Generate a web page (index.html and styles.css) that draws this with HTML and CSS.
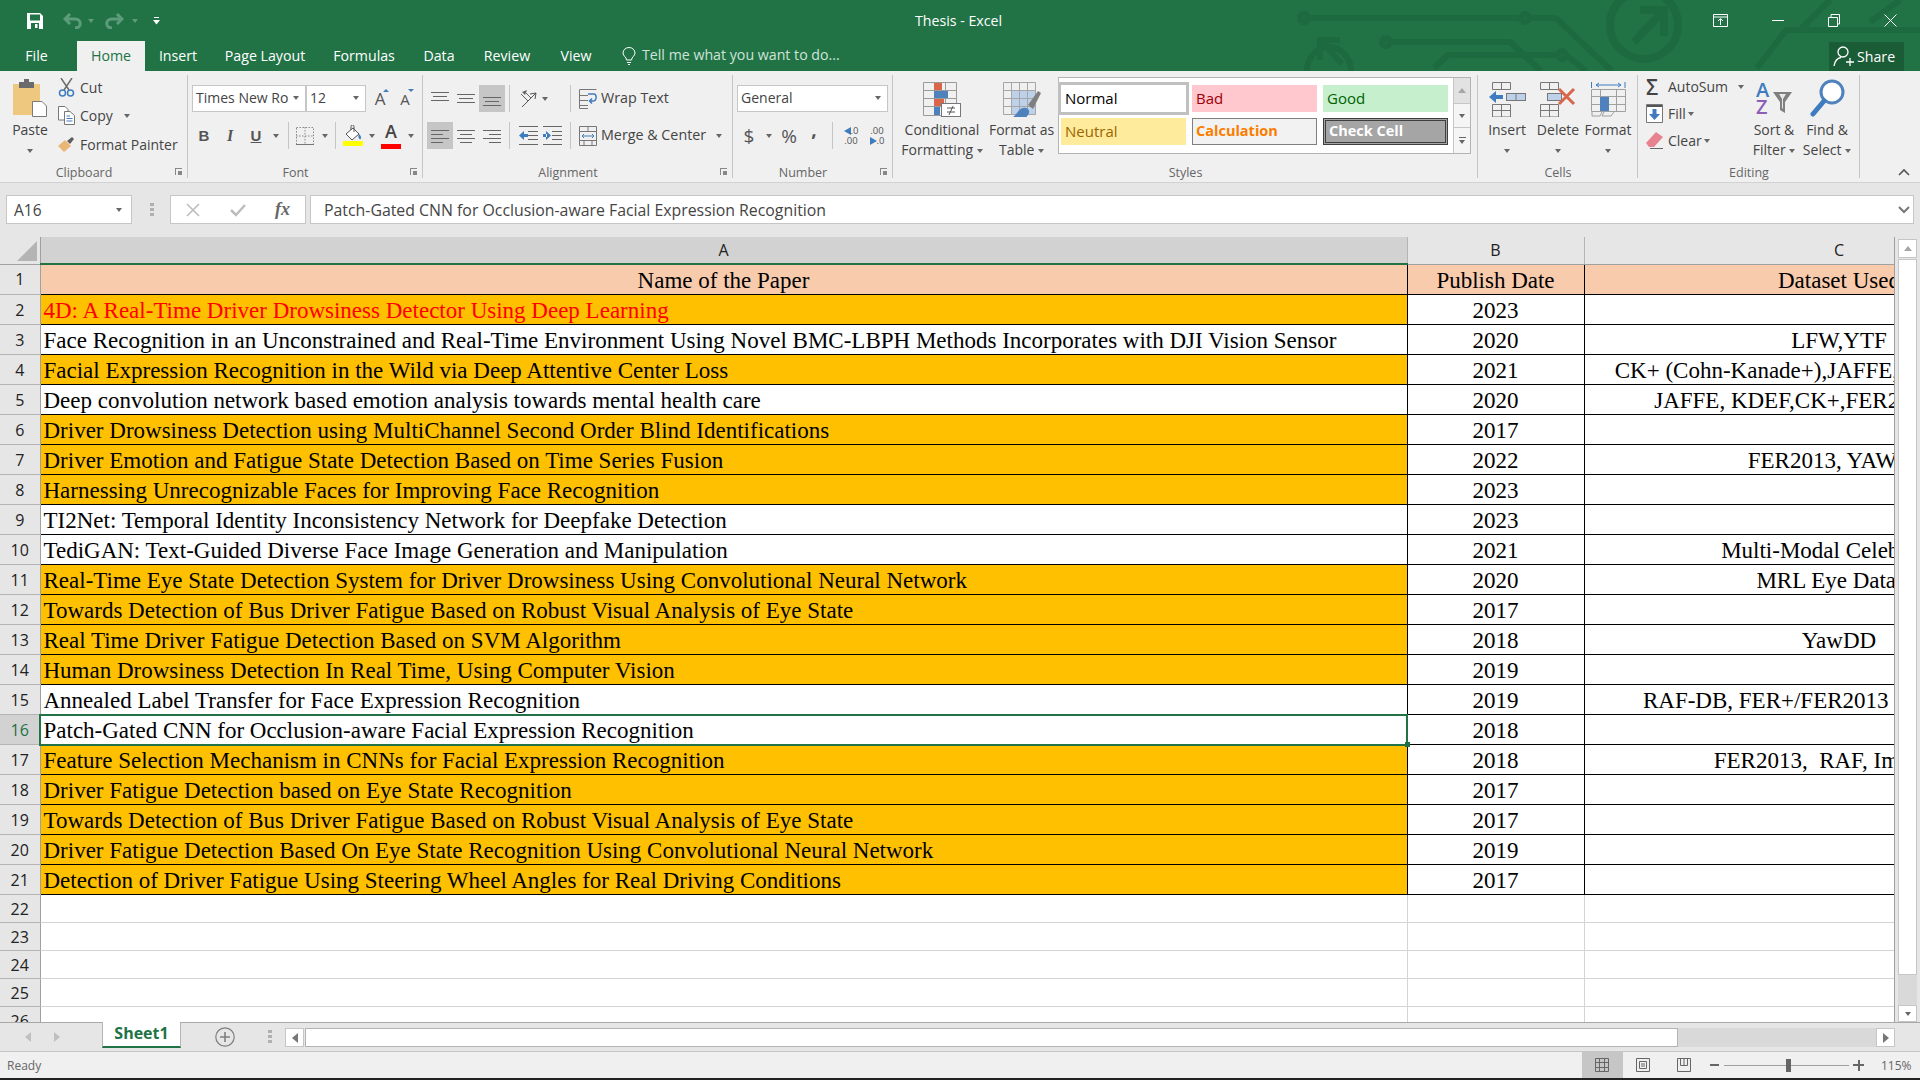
FILE: index.html
```html
<!DOCTYPE html>
<html lang="en">
<head>
  <meta charset="UTF-8">
  <title>Thesis - Excel</title>
  <link rel="stylesheet" href="styles.css">
</head>
<body>
  <header class="titlebar">
    <svg class="circuit" width="1920" height="71" viewBox="0 0 1920 71">
      <g fill="none" stroke="#1e6a40" stroke-width="6">
        <circle cx="1304" cy="18" r="4"/>
        <path d="M1308 18H1521M1529 18H1556L1612 71"/>
        <circle cx="1525" cy="18" r="4"/>
        <circle cx="1386" cy="42" r="4"/>
        <path d="M1390 42H1510L1541 71"/>
        <circle cx="1562" cy="55" r="4"/>
        <path d="M1434 68L1448 55H1558M1566 55L1586 71"/>
        <circle cx="1644" cy="25" r="34" stroke-width="8"/>
        <path d="M1634 42L1662 12M1640 10H1664V36" stroke-width="8"/>
        <path d="M1307 71A22 24 0 1 1 1351 71" stroke-width="6"/>
        <path d="M1342 64L1322 42M1320 60V40H1340" stroke-width="6"/>
        <path d="M1757 68L1786 30H1920M1830 0L1800 30M1870 22L1900 0"/>
      </g>
    </svg>
    <div class="title-row">
      <div class="qat">
        <svg class="ic-save" width="16" height="16" viewBox="0 0 16 16"><path d="M0 0H13L16 3V16H0Z" fill="#fff"/><rect x="3" y="1.5" width="10" height="6" fill="#217346"/><rect x="4" y="10" width="8" height="6" fill="#217346"/><rect x="8" y="11" width="2.5" height="4" fill="#fff"/></svg>
        <svg class="ic-undo" width="20" height="16" viewBox="0 0 20 16"><path d="M7 1L2 6L7 11M2 6H12C19 6 19 15 12 15" fill="none" stroke="#5d9c7a" stroke-width="3"/></svg>
        <span class="caret caret-dim ic-undo-caret"></span>
        <svg class="ic-redo" width="20" height="16" viewBox="0 0 20 16"><path d="M13 1L18 6L13 11M18 6H8C1 6 1 15 8 15" fill="none" stroke="#5d9c7a" stroke-width="3"/></svg>
        <span class="caret caret-dim ic-redo-caret"></span>
        <svg class="ic-more" width="7" height="8" viewBox="0 0 7 8"><path d="M1 .5H6" stroke="#fff"/><path d="M0 3H7L3.5 7.5Z" fill="#fff"/></svg>
      </div>
      <div class="doc-title">Thesis - Excel</div>
      <div class="win-controls">
        <svg width="15" height="13" viewBox="0 0 15 13"><path d="M.5.5H14.5V12.5H.5ZM.5 3H14.5M7.5 11V5M5 7L7.5 4.5L10 7" fill="none" stroke="#fff"/></svg>
        <svg width="12" height="13" viewBox="0 0 12 13"><path d="M0 6.5H12" stroke="#fff"/></svg>
        <svg width="12" height="13" viewBox="0 0 12 13"><path d="M.5 3.5H9.5V12.5H.5ZM3 3V.5H11.5V10H10" fill="none" stroke="#fff"/></svg>
        <svg width="13" height="13" viewBox="0 0 13 13"><path d="M.5.5L12.5 12.5M12.5.5L.5 12.5" stroke="#fff"/></svg>
      </div>
    </div>
    <nav class="tabs">
      <span class="tab t-file">File</span>
      <span class="tab t-home">Home</span>
      <span class="tab t-insert">Insert</span>
      <span class="tab t-layout">Page Layout</span>
      <span class="tab t-formulas">Formulas</span>
      <span class="tab t-data">Data</span>
      <span class="tab t-review">Review</span>
      <span class="tab t-view">View</span>
      <svg class="bulb" width="14" height="18" viewBox="0 0 14 18"><path d="M4.5 13C4.5 10 1 9 1 6A6 5.500 0 0 1 13 6C13 9 9.500 10 9.500 13ZM5 15.500H9M6 17.500H8" fill="none" stroke="#fff"/></svg>
      <span class="tell-me">Tell me what you want to do...</span>
      <span class="share">
        <svg width="22" height="22" viewBox="0 0 22 22"><circle cx="10" cy="7" r="5" fill="none" stroke="#fff" stroke-width="1.300"/><path d="M1 21C2 15 5 13 8 12.500M17 13V21M13 17H21" fill="none" stroke="#fff" stroke-width="1.300"/></svg>
        Share
      </span>
    </nav>
  </header>

  <section class="ribbon">
    <div class="group g-clipboard">
      <div class="group-body">
        <div class="large-btn w-paste">
          <div class="large-icon">
            <svg width="34" height="38" viewBox="0 0 34 38"><rect x="0" y="5" width="27" height="31" fill="#edc87e"/><rect x="6" y="3" width="15" height="6" fill="#6b6b6b"/><rect x="11" y="0" width="5" height="4" fill="#6b6b6b"/><path d="M19.500 22.500H29L33.500 27V37.500H19.500Z" fill="#fff" stroke="#7a7a7a"/></svg>
          </div>
          <div class="btn-line">Paste</div>
          <div class="btn-line"><span class="caret"></span></div>
        </div>
        <div class="list-col">
          <div class="list-row">
            <svg class="list-ic" width="17" height="19" viewBox="0 0 17 19"><path d="M3 0L11 12M14 0L6 12" stroke="#6b6b6b" stroke-width="1.500"/><circle cx="4.500" cy="15" r="3" fill="none" stroke="#3f7cbf" stroke-width="1.500"/><circle cx="12.500" cy="15" r="3" fill="none" stroke="#3f7cbf" stroke-width="1.500"/></svg>
            Cut
          </div>
          <div class="list-row">
            <svg class="list-ic" width="17" height="19" viewBox="0 0 17 19"><path d="M.5.5H7L10 3.500V14H.5Z" fill="#fff" stroke="#777"/><path d="M6.500 5.500H12L16.500 9.500V18.500H6.500Z" fill="#fff" stroke="#777"/><path d="M8.500 10H12M8.500 12.500H14.500M8.500 15H14.500" stroke="#3f7cbf"/></svg>
            Copy <span class="caret caret-copy"></span>
          </div>
          <div class="list-row">
            <svg class="list-ic" width="17" height="17" viewBox="0 0 17 17"><path d="M0 10L7 4L13 10L6 16Z" fill="#eab676"/><path d="M9 5L14 1L16 3L12 8Z" fill="#5c5c5c"/></svg>
            Format Painter
          </div>
        </div>
      </div>
      <div class="group-label has-launcher">Clipboard<span class="launcher"></span></div>
    </div>

    <div class="group g-font">
      <div class="group-body rows">
        <div class="row">
          <div class="combo w-fontname"><span>Times New Ro</span><span class="caret"></span></div>
          <div class="combo w-fontsize"><span>12</span><span class="caret"></span></div>
          <span class="tb w24 ml2 size-a">A<i class="tri-up"></i></span>
          <span class="tb w24 ml1 size-a size-a-s">A<i class="tri-down"></i></span>
        </div>
        <div class="row">
          <span class="tb w24 fmt-b">B</span>
          <span class="tb w28 fmt-i">I</span>
          <span class="tb w24 fmt-u">U</span>
          <span class="tb w16"><span class="caret"></span></span>
          <span class="vsep ml4"></span>
          <span class="tb w24 ml4">
            <svg width="18" height="18" viewBox="0 0 18 18"><path d="M.5.5H17.500V17.500H.5Z" fill="none" stroke="#8a8a8a" stroke-dasharray="1.500 1.500"/><path d="M9 0V18M0 9H18" stroke="#8a8a8a" stroke-dasharray="1.500 1.500"/><path d="M0 17.500H18" stroke="#777"/></svg>
          </span>
          <span class="tb w16"><span class="caret"></span></span>
          <span class="vsep ml2"></span>
          <span class="tb w24 ml5">
            <svg width="20" height="21" viewBox="0 0 20 21"><path d="M3 9L10 3L16 9L9 15Z" fill="#fff" stroke="#555"/><path d="M8 5V1.500A1.500 1.500 0 0 1 11 1.500V7" fill="none" stroke="#555"/><path d="M16 9C18 11 19 13 17 14.500C15 13 15 11 16 9Z" fill="#3f7cbf"/><rect x="0" y="16" width="20" height="5" fill="#ffff00"/></svg>
          </span>
          <span class="tb w14"><span class="caret"></span></span>
          <span class="tb w24 color-a">A<i class="color-bar"></i></span>
          <span class="tb w16"><span class="caret"></span></span>
        </div>
      </div>
      <div class="group-label has-launcher">Font<span class="launcher"></span></div>
    </div>

    <div class="group g-align">
      <div class="group-body rows">
        <div class="row">
          <span class="tb w26"><svg width="18" height="14" viewBox="0 0 18 14"><path d="M0 .5H18M2 4.500H16M0 8.500H18" stroke="#666"/></svg></span>
          <span class="tb w26"><svg width="18" height="14" viewBox="0 0 18 14"><path d="M0 2.500H18M2 6.500H16M0 10.500H18" stroke="#666"/></svg></span>
          <span class="tb w26 on"><svg width="18" height="14" viewBox="0 0 18 14"><path d="M0 5.500H18M2 9.500H16M0 13.500H18" stroke="#666"/></svg></span>
          <span class="vsep ml4"></span>
          <span class="tb w24 ml6"><svg width="19" height="19" viewBox="0 0 19 19"><path d="M2 5L9 12M5 2L12 9" stroke="#666"/><path d="M3 3L8 1L6 6Z" fill="#666"/><path d="M3 18L17 4M17 4L11 5M17 4L16 10" fill="none" stroke="#555"/></svg></span>
          <span class="tb w10"><span class="caret"></span></span>
          <span class="vsep ml20"></span>
          <span class="wide-tb ml8">
            <svg width="18" height="20" viewBox="0 0 18 20"><path d="M.5.500H17.500M.5 6.500H9M.5 11.500H9M.5 16.500H9M.5.500V19.500H9" fill="none" stroke="#777"/><path d="M9 5H15C18 5 18 12 14 12H11M13 9.500L10.500 12L13 14.500" fill="none" stroke="#3f7cbf" stroke-width="1.500"/></svg>
            <span class="lbl">Wrap Text</span>
          </span>
        </div>
        <div class="row">
          <span class="tb w26 on"><svg width="18" height="14" viewBox="0 0 18 14"><path d="M0 1.500H18M0 5.500H12M0 9.500H18M0 13.500H12" stroke="#666"/></svg></span>
          <span class="tb w26"><svg width="18" height="14" viewBox="0 0 18 14"><path d="M0 1.500H18M3 5.500H15M0 9.500H18M3 13.500H15" stroke="#666"/></svg></span>
          <span class="tb w26"><svg width="18" height="14" viewBox="0 0 18 14"><path d="M0 1.500H18M6 5.500H18M0 9.500H18M6 13.500H18" stroke="#666"/></svg></span>
          <span class="vsep ml4"></span>
          <span class="tb w24 ml6"><svg width="19" height="19" viewBox="0 0 19 19"><path d="M0 .5H19M9 5.500H19M9 9.500H19M9 13.500H19M0 18.500H19" stroke="#666"/><path d="M0 9.500L5 5V14ZM4 8H9V11H4Z" fill="#3f7cbf"/></svg></span>
          <span class="tb w24"><svg width="19" height="19" viewBox="0 0 19 19"><path d="M0 .5H19M9 5.500H19M9 9.500H19M9 13.500H19M0 18.500H19" stroke="#666"/><path d="M8 9.500L3 5V14ZM0 8H4V11H0Z" fill="#3f7cbf"/></svg></span>
          <span class="vsep ml6"></span>
          <span class="wide-tb ml8">
            <svg width="18" height="20" viewBox="0 0 18 20"><path d="M.5.500H17.500V19.500H.5ZM.5 5.500H17.500M.5 14.500H17.500M9 .5V5.500M5 14.500V19.500M13 14.500V19.500" fill="none" stroke="#777"/><path d="M3 10H15M5 8L3 10L5 12M13 8L15 10L13 12" fill="none" stroke="#3f7cbf"/></svg>
            <span class="lbl">Merge &amp; Center</span> <span class="caret caret-merge"></span>
          </span>
        </div>
      </div>
      <div class="group-label has-launcher">Alignment<span class="launcher"></span></div>
    </div>

    <div class="group g-number">
      <div class="group-body rows">
        <div class="row">
          <div class="combo w-general"><span>General</span><span class="caret"></span></div>
        </div>
        <div class="row">
          <span class="tb w24 num-sym">$</span>
          <span class="tb w16"><span class="caret"></span></span>
          <span class="tb w24 num-sym">%</span>
          <span class="tb w24 ml1 num-sym num-comma">,</span>
          <span class="vsep ml6"></span>
          <span class="tb w26 ml5 dec"><i class="dec-line"><b class="arrow-l"></b>.0</i><i class="dec-line">.00</i></span>
          <span class="tb w26 dec"><i class="dec-line">.00</i><i class="dec-line"><b class="arrow-r"></b>.0</i></span>
        </div>
      </div>
      <div class="group-label has-launcher">Number<span class="launcher"></span></div>
    </div>

    <div class="group g-styles">
      <div class="group-body">
        <div class="large-btn w-cond">
          <div class="large-icon">
            <svg width="38" height="35" viewBox="0 0 38 35"><path d="M.5.500H33.500V33.500H.5ZM11.500.5V33.500M22.500.5V33.500M.5 8.500H33.500M.5 16.500H33.500M.5 24.500H33.500" fill="none" stroke="#9a9a9a"/><rect x="11" y="1" width="8" height="7" fill="#d9654a"/><rect x="11" y="9" width="14" height="7" fill="#4f81bd"/><rect x="11" y="17" width="10" height="7" fill="#d9654a"/><rect x="11" y="25" width="6" height="8" fill="#4f81bd"/><rect x="18.500" y="21.500" width="19" height="13" fill="#fff" stroke="#777"/><path d="M24 26H32M24 30H32M30 24L26 33" stroke="#555"/></svg>
          </div>
          <div class="btn-line">Conditional</div>
          <div class="btn-line">Formatting <span class="caret"></span></div>
        </div>
        <div class="large-btn w-fmt">
          <div class="large-icon">
            <svg width="38" height="35" viewBox="0 0 38 35"><rect x="9" y="8" width="24" height="24" fill="#bdd2ea"/><path d="M.5.500H32.500V32.500H.5ZM8.500.5V32.500M16.500.5V32.500M24.500.5V32.500M.5 8.500H32.500M.5 16.500H32.500M.5 24.500H32.500" fill="none" stroke="#a6a6a6"/><path d="M25 23L35 9L38 11L30 27Z" fill="#7f7f7f"/><path d="M10 35C14 33 15 27 20 26C24 25 27 28 26 31C25 33 24 35 23 35Z" fill="#4f81bd"/></svg>
          </div>
          <div class="btn-line">Format as</div>
          <div class="btn-line">Table <span class="caret"></span></div>
        </div>
        <div class="gallery">
          <div class="gallery-cells">
            <span class="style-cell s-normal">Normal</span>
            <span class="style-cell s-bad">Bad</span>
            <span class="style-cell s-good">Good</span>
            <span class="style-cell s-neutral">Neutral</span>
            <span class="style-cell s-calc">Calculation</span>
            <span class="style-cell s-check">Check Cell</span>
          </div>
          <div class="gallery-scroll">
            <span class="gs gs-up"><span class="caret-up"></span></span>
            <span class="gs gs-mid"><span class="caret"></span></span>
            <span class="gs gs-more"><span class="more-bar"></span><span class="caret"></span></span>
          </div>
        </div>
      </div>
      <div class="group-label">Styles</div>
    </div>

    <div class="group g-cells">
      <div class="group-body">
        <div class="large-btn w-insert">
          <div class="large-icon">
            <svg width="37" height="35" viewBox="0 0 37 35"><path d="M3.500.5H21.500V7.500H3.500ZM12.500.5V7.500M3.500 22.500H21.500V35H3.500ZM3.500 28.500H21.500M12.500 22.500V35" fill="none" stroke="#777"/><rect x="17.500" y="11.500" width="19" height="7" fill="#bdd2ea" stroke="#777"/><path d="M27 11.500V18.500" stroke="#777"/><path d="M0 15L7 9V13H14V17H7V21Z" fill="#3f7cbf"/></svg>
          </div>
          <div class="btn-line">Insert</div>
          <div class="btn-line"><span class="caret"></span></div>
        </div>
        <div class="large-btn w-delete">
          <div class="large-icon">
            <svg width="37" height="35" viewBox="0 0 37 35"><path d="M.5.5H18.500V7.500H.5ZM9.500.5V7.500M.5 22.500H18.500V35H.5ZM.5 28.500H18.500M9.500 22.500V35" fill="none" stroke="#777"/><rect x="7.500" y="11.500" width="14" height="7" fill="#bdd2ea" stroke="#777"/><path d="M19 7L34 22M34 7L19 22" stroke="#d9654a" stroke-width="3"/></svg>
          </div>
          <div class="btn-line">Delete</div>
          <div class="btn-line"><span class="caret"></span></div>
        </div>
        <div class="large-btn w-format">
          <div class="large-icon">
            <svg width="35" height="35" viewBox="0 0 35 35"><path d="M.5 0V6M34 0V6M5 3H30M8 1L5 3L8 5M27 1L30 3L27 5" fill="none" stroke="#3f7cbf"/><path d="M.5 7.500H34.500V29.500H.5ZM9.500 7.500V29.500M25.500 7.500V29.500M.5 14.500H34.500M.5 22.500H34.500" fill="none" stroke="#a0a0a0"/><rect x="9" y="15" width="9" height="14" fill="#4f81bd"/><path d="M1 30V34H9L11 30M13 30L11 34H20L23 30" fill="none" stroke="#a0a0a0"/></svg>
          </div>
          <div class="btn-line">Format</div>
          <div class="btn-line"><span class="caret"></span></div>
        </div>
      </div>
      <div class="group-label">Cells</div>
    </div>

    <div class="group g-editing">
      <div class="group-body">
        <div class="list-col list-edit">
          <div class="list-row">
            <span class="sigma">Σ</span>AutoSum <span class="caret caret-auto"></span>
          </div>
          <div class="list-row">
            <svg class="list-ic" width="17" height="19" viewBox="0 0 17 19"><path d="M.5.5H16.500V18.500H.5Z" fill="#fff" stroke="#777"/><rect x="1" y="1" width="15" height="2" fill="#555"/><path d="M8.500 16L3 10H6.500V5H10.500V10H14Z" fill="#3f7cbf"/></svg>
            Fill <span class="caret caret-tight"></span>
          </div>
          <div class="list-row">
            <svg class="list-ic" width="17" height="17" viewBox="0 0 17 17"><path d="M0 11L10 0L17 5L8 15H3Z" fill="#e8828f"/><path d="M4 16.500H17" stroke="#666"/></svg>
            Clear <span class="caret caret-tight"></span>
          </div>
        </div>
        <div class="large-btn w-sort">
          <div class="large-icon large-icon-sort">
            <svg width="37" height="33" viewBox="0 0 37 33">
              <text x="0" y="15" class="sort-a">A</text>
              <text x="0" y="32" class="sort-z">Z</text>
              <path d="M17 10H36L29 20V31L24 28V20Z" fill="#7f7f7f"/><path d="M23 12H30L27 17V27L26 26V17Z" fill="#e8e8e8"/>
            </svg>
          </div>
          <div class="btn-line">Sort &amp;</div>
          <div class="btn-line">Filter <span class="caret"></span></div>
        </div>
        <div class="large-btn w-find">
          <div class="large-icon">
            <svg width="35" height="38" viewBox="0 0 35 38"><circle cx="22" cy="13" r="11" fill="#fff" stroke="#4f81bd" stroke-width="3"/><path d="M14 22L3 35" stroke="#3f7cbf" stroke-width="5" stroke-linecap="round"/></svg>
          </div>
          <div class="btn-line">Find &amp;</div>
          <div class="btn-line">Select <span class="caret"></span></div>
        </div>
      </div>
      <div class="group-label">Editing</div>
    </div>

    <svg class="collapse" width="12" height="8" viewBox="0 0 12 8"><path d="M1 7L6 2L11 7" fill="none" stroke="#555" stroke-width="1.600"/></svg>
  </section>

  <section class="formula-bar">
    <div class="name-box"><span>A16</span><span class="caret"></span></div>
    <div class="grip"></div>
    <div class="fx-box">
      <svg width="14" height="14" viewBox="0 0 14 14"><path d="M1 1L13 13M13 1L1 13" stroke="#bdbdbd" stroke-width="1.600"/></svg>
      <svg width="16" height="14" viewBox="0 0 16 14"><path d="M1 7L6 12L15 2" fill="none" stroke="#bdbdbd" stroke-width="2.500"/></svg>
      <span class="fx">fx</span>
    </div>
    <div class="formula-input"><span>Patch-Gated CNN for Occlusion-aware Facial Expression Recognition</span><svg width="12" height="8" viewBox="0 0 12 8"><path d="M1 1L6 6L11 1" fill="none" stroke="#777" stroke-width="2"/></svg></div>
  </section>

  <section class="sheet">
    <div class="grid-wrap">
      <table class="grid">
        <colgroup><col class="c-head"><col class="c-a"><col class="c-b"><col class="c-c"></colgroup>
        <thead>
          <tr>
            <th class="corner"><i class="corner-tri"></i></th>
            <th class="ch ch-on">A</th>
            <th class="ch">B</th>
            <th class="ch">C</th>
          </tr>
        </thead>
        <tbody>
          <tr class="r-head"><th class="rh">1</th><td class="mid">Name of the Paper</td><td class="mid">Publish Date</td><td class="mid">Dataset Used</td></tr>
          <tr><th class="rh">2</th><td class="hl red">4D: A Real-Time Driver Drowsiness Detector Using Deep Learning</td><td class="mid">2023</td><td class="mid"></td></tr>
          <tr><th class="rh">3</th><td>Face Recognition in an Unconstrained and Real-Time Environment Using Novel BMC-LBPH Methods Incorporates with DJI Vision Sensor</td><td class="mid">2020</td><td class="mid">LFW,YTF</td></tr>
          <tr><th class="rh">4</th><td class="hl">Facial Expression Recognition in the Wild via Deep Attentive Center Loss</td><td class="mid">2021</td><td class="mid">CK+ (Cohn-Kanade+),JAFFE,KDEF,FER2013+</td></tr>
          <tr><th class="rh">5</th><td>Deep convolution network based emotion analysis towards mental health care</td><td class="mid">2020</td><td class="mid">JAFFE, KDEF,CK+,FER2013,RAF-DB</td></tr>
          <tr><th class="rh">6</th><td class="hl">Driver Drowsiness Detection using MultiChannel Second Order Blind Identifications</td><td class="mid">2017</td><td class="mid"></td></tr>
          <tr><th class="rh">7</th><td class="hl">Driver Emotion and Fatigue State Detection Based on Time Series Fusion</td><td class="mid">2022</td><td class="mid">FER2013, YAWDD</td></tr>
          <tr><th class="rh">8</th><td class="hl">Harnessing Unrecognizable Faces for Improving Face Recognition</td><td class="mid">2023</td><td class="mid"></td></tr>
          <tr><th class="rh">9</th><td>TI2Net: Temporal Identity Inconsistency Network for Deepfake Detection</td><td class="mid">2023</td><td class="mid"></td></tr>
          <tr><th class="rh">10</th><td>TediGAN: Text-Guided Diverse Face Image Generation and Manipulation</td><td class="mid">2021</td><td class="mid">Multi-Modal CelebA-HQ</td></tr>
          <tr><th class="rh">11</th><td class="hl">Real-Time Eye State Detection System for Driver Drowsiness Using Convolutional Neural Network</td><td class="mid">2020</td><td class="mid">MRL Eye Dataset</td></tr>
          <tr><th class="rh">12</th><td class="hl">Towards Detection of Bus Driver Fatigue Based on Robust Visual Analysis of Eye State</td><td class="mid">2017</td><td class="mid"></td></tr>
          <tr><th class="rh">13</th><td class="hl">Real Time Driver Fatigue Detection Based on SVM Algorithm</td><td class="mid">2018</td><td class="mid">YawDD</td></tr>
          <tr><th class="rh">14</th><td class="hl">Human Drowsiness Detection In Real Time, Using Computer Vision</td><td class="mid">2019</td><td class="mid"></td></tr>
          <tr><th class="rh">15</th><td>Annealed Label Transfer for Face Expression Recognition</td><td class="mid">2019</td><td class="mid">RAF-DB, FER+/FER2013 and AffectNet&nbsp;&nbsp;</td></tr>
          <tr><th class="rh rh-on">16</th><td class="active">Patch-Gated CNN for Occlusion-aware Facial Expression Recognition</td><td class="mid">2018</td><td class="mid"></td></tr>
          <tr><th class="rh">17</th><td class="hl">Feature Selection Mechanism in CNNs for Facial Expression Recognition</td><td class="mid">2018</td><td class="mid">FER2013,&nbsp; RAF, ImageNet</td></tr>
          <tr><th class="rh">18</th><td class="hl">Driver Fatigue Detection based on Eye State Recognition</td><td class="mid">2017</td><td class="mid"></td></tr>
          <tr><th class="rh">19</th><td class="hl">Towards Detection of Bus Driver Fatigue Based on Robust Visual Analysis of Eye State</td><td class="mid">2017</td><td class="mid"></td></tr>
          <tr><th class="rh">20</th><td class="hl">Driver Fatigue Detection Based On Eye State Recognition Using Convolutional Neural Network</td><td class="mid">2019</td><td class="mid"></td></tr>
          <tr><th class="rh">21</th><td class="hl">Detection of Driver Fatigue Using Steering Wheel Angles for Real Driving Conditions</td><td class="mid">2017</td><td class="mid"></td></tr>
          <tr class="blank"><th class="rh">22</th><td></td><td></td><td></td></tr>
          <tr class="blank"><th class="rh">23</th><td></td><td></td><td></td></tr>
          <tr class="blank"><th class="rh">24</th><td></td><td></td><td></td></tr>
          <tr class="blank"><th class="rh">25</th><td></td><td></td><td></td></tr>
          <tr class="blank"><th class="rh">26</th><td></td><td></td><td></td></tr>
        </tbody>
      </table>
    </div>
    <div class="vscroll">
      <span class="sb-btn sb-up"><span class="caret-up"></span></span>
      <span class="sb-thumb"></span>
      <span class="sb-track"></span>
      <span class="sb-btn sb-down"><span class="caret"></span></span>
    </div>
  </section>

  <section class="sheet-tabs">
    <span class="nav-tri nav-left"></span>
    <span class="nav-tri nav-right"></span>
    <span class="sheet-tab">Sheet1</span>
    <svg class="add-sheet" width="20" height="20" viewBox="0 0 20 20"><circle cx="10" cy="10" r="9.200" fill="none" stroke="#7f7f7f" stroke-width="1.200"/><path d="M10 5V15M5 10H15" stroke="#7f7f7f" stroke-width="1.600"/></svg>
    <div class="grip grip-tabs"></div>
    <div class="hscroll">
      <span class="hs-btn"><span class="nav-tri nav-dark-left"></span></span>
      <span class="hs-thumb"></span>
      <span class="hs-track"></span>
      <span class="hs-btn"><span class="nav-tri nav-dark-right"></span></span>
    </div>
  </section>

  <footer class="status">
    <span class="ready">Ready</span>
    <div class="views">
      <span class="view view-on"><svg width="14" height="14" viewBox="0 0 14 14"><path d="M.5.5H13.500V13.500H.5ZM4.500.5V13.500M9.500.5V13.500M.5 4.500H13.500M.5 9.500H13.500" fill="none" stroke="#666"/></svg></span>
      <span class="view"><svg width="14" height="14" viewBox="0 0 14 14"><path d="M.5.5H13.500V13.500H.5ZM3.500 3.500H10.500V10.500H3.500ZM5 6H9M5 8H9" fill="none" stroke="#666"/></svg></span>
      <span class="view"><svg width="14" height="14" viewBox="0 0 14 14"><path d="M.5.5H13.500V13.500H.5ZM3.500.5V7.500H10.500V.5M7 .5V7.500" fill="none" stroke="#666"/></svg></span>
    </div>
    <span class="zoom-minus"></span>
    <div class="zoom-slider"><span class="zoom-thumb"></span></div>
    <span class="zoom-plus"></span>
    <span class="zoom-val">115%</span>
  </footer>
  <div class="bottom-edge"></div>
</body>
</html>
```

FILE: styles.css
```css
* {
  box-sizing: border-box;
}
html, body {
  margin: 0;
  padding: 0;
  height: 1080px;
  overflow: hidden;
}
body {
  font-family: "Open Sans", sans-serif;
  font-size: 14px;
  color: #444;
  background-color: #e6e6e6;
  display: flex;
  flex-direction: column;
}
i {
  font-style: normal;
}

/* title bar */
.titlebar {
  position: relative;
  isolation: isolate;
  height: 71px;
  flex: none;
  background-color: #217346;
  color: #fff;
}
.circuit {
  position: absolute;
  left: 0;
  top: 0;
  z-index: -1;
}
.title-row {
  display: grid;
  grid-template-columns: 1fr auto 1fr;
  height: 41px;
  align-items: center;
}
.qat {
  display: flex;
  align-items: center;
  padding-left: 27px;
}
.ic-undo {
  margin-left: 20px;
}
.ic-undo-caret {
  margin-left: 5px;
}
.ic-redo {
  margin-left: 10px;
}
.ic-redo-caret {
  margin-left: 8px;
}
.ic-more {
  margin-left: 15px;
}
.doc-title {
  font-size: 14.200px;
  margin-right: 3px;
}
.win-controls {
  display: flex;
  justify-content: flex-end;
  align-items: center;
  padding-right: 23px;
  gap: 44px;
}
.tabs {
  display: flex;
  height: 30px;
  align-items: center;
}
.tab {
  height: 30px;
  line-height: 29px;
  text-align: center;
  font-size: 14.200px;
}
.t-file { width: 73px; margin-right: 4px; }
.t-home { width: 68px; background-color: #f0f0f0; color: #217346; }
.t-insert { width: 66px; }
.t-layout { width: 108px; }
.t-formulas { width: 90px; }
.t-data { width: 60px; }
.t-review { width: 76px; }
.t-view { width: 62px; }
.bulb {
  margin-left: 15px;
}
.tell-me {
  margin-left: 6px;
  font-size: 14.200px;
  line-height: 28px;
  height: 30px;
  color: #cfe3d8;
}
.share {
  margin-left: auto;
  margin-right: 16px;
  width: 75px;
  height: 29px;
  display: flex;
  align-items: center;
  gap: 2px;
  padding-left: 4px;
  background-color: #1a5c36;
  font-size: 14.200px;
}

/* ribbon */
.ribbon {
  display: flex;
  position: relative;
  height: 112px;
  flex: none;
  background-color: #f0f0f0;
  border-bottom: 1px solid #d2d2d2;
}
.group {
  position: relative;
  display: flex;
  flex-direction: column;
  flex: none;
}
.group::after {
  content: "";
  position: absolute;
  right: 0;
  top: 4px;
  bottom: 4px;
  width: 1px;
  background-color: #c6c6c6;
}
.g-clipboard { width: 188px; }
.g-font { width: 235px; }
.g-align { width: 310px; }
.g-number { width: 160px; }
.g-styles { width: 585px; }
.g-cells { width: 160px; }
.g-editing { width: 222px; }
.group-body {
  display: flex;
  height: 90px;
}
.group-label {
  height: 21px;
  line-height: 23px;
  text-align: center;
  font-size: 12.500px;
  color: #666;
}
.has-launcher {
  padding-right: 20px;
}
.launcher {
  position: absolute;
  right: 6px;
  bottom: 7px;
  width: 7px;
  height: 7px;
  border: 1px solid #888;
  border-width: 1px 0 0 1px;
}
.launcher::after {
  content: "";
  position: absolute;
  right: 0;
  bottom: 0;
  width: 4px;
  height: 4px;
  background-color: #888;
}
.caret {
  display: inline-block;
  width: 0;
  height: 0;
  border-left: 3.5px solid transparent;
  border-right: 3.5px solid transparent;
  border-top: 4px solid #666;
  vertical-align: middle;
}
.caret-dim {
  border-top-color: #5d9c7a;
}
.caret-up {
  display: inline-block;
  width: 0;
  height: 0;
  border-left: 4px solid transparent;
  border-right: 4px solid transparent;
  border-bottom: 5px solid #a6a6a6;
}
.caret-copy { margin-left: 6px; }
.caret-merge { margin-left: 6px; }
.caret-auto { margin-left: 5px; }
.caret-tight { margin-left: -3px; }

.large-btn {
  display: flex;
  flex-direction: column;
  align-items: center;
  flex: none;
  white-space: nowrap;
}
.large-icon {
  height: 46px;
  margin-top: 3px;
  padding-bottom: 3px;
  display: flex;
  align-items: flex-end;
}
.large-icon-sort {
  padding-bottom: 5px;
}
.btn-line {
  height: 20px;
  line-height: 19px;
}
.w-paste { width: 46px; margin-left: 7px; }
.w-cond { width: 86px; margin-left: 6px; }
.w-fmt { width: 73px; }
.w-insert { width: 48px; margin-left: 5px; }
.w-delete { width: 54px; }
.w-format { width: 46px; }
.w-sort { width: 46px; }
.w-find { width: 60px; }

.list-col {
  padding-top: 2px;
  margin-left: 5px;
  width: 125px;
}
.list-edit {
  margin-left: 8px;
  width: 105px;
  padding-top: 2px;
}
.list-row {
  display: flex;
  align-items: center;
  gap: 5px;
  height: 28.500px;
  white-space: nowrap;
}
.list-edit .list-row {
  height: 27px;
}
.list-ic {
  flex: none;
}
.sigma {
  width: 17px;
  font-size: 21px;
  font-weight: 600;
  line-height: 20px;
  color: #444;
}

.rows {
  flex-direction: column;
  gap: 10px;
  padding: 14px 0 0 4px;
}
.row {
  display: flex;
  height: 27px;
  align-items: center;
}
.combo {
  display: flex;
  align-items: center;
  justify-content: space-between;
  height: 27px;
  padding: 0 6px 2px 3px;
  background-color: #fff;
  border: 1px solid #c6c6c6;
  white-space: nowrap;
}
.w-fontname { width: 114px; }
.w-fontsize { width: 60px; }
.w-general { width: 151px; }
.tb {
  position: relative;
  display: flex;
  align-items: center;
  justify-content: center;
  height: 27px;
  flex: none;
}
.tb.on {
  background-color: #c6c6c6;
}
.w10 { width: 10px; }
.w14 { width: 14px; }
.w16 { width: 16px; }
.w24 { width: 24px; }
.w26 { width: 26px; }
.w28 { width: 28px; }
.ml1 { margin-left: 1px; }
.ml2 { margin-left: 2px; }
.ml4 { margin-left: 4px; }
.ml5 { margin-left: 5px; }
.ml6 { margin-left: 6px; }
.ml8 { margin-left: 8px; }
.ml20 { margin-left: 20px; }
.vsep {
  width: 1px;
  height: 27px;
  flex: none;
  background-color: #c6c6c6;
}
.wide-tb {
  display: flex;
  align-items: center;
  gap: 4px;
  white-space: nowrap;
  font-size: 14.300px;
}
.lbl {
  padding-bottom: 2px;
}
.size-a {
  font-size: 17px;
  color: #555;
}
.size-a-s {
  font-size: 15px;
}
.tri-up, .tri-down {
  position: absolute;
  right: 3px;
  top: 4px;
  width: 0;
  height: 0;
  border-left: 3px solid transparent;
  border-right: 3px solid transparent;
}
.tri-up {
  border-bottom: 3px solid #3f7cbf;
}
.tri-down {
  border-top: 3px solid #3f7cbf;
}
.fmt-b {
  font-family: "Liberation Sans", sans-serif;
  font-weight: 700;
  font-size: 15px;
  color: #555;
}
.fmt-i {
  font-family: "Liberation Serif", serif;
  font-style: italic;
  font-weight: 700;
  font-size: 16px;
  color: #555;
}
.fmt-u {
  font-family: "Liberation Sans", sans-serif;
  font-size: 15px;
  font-weight: 700;
  color: #555;
  text-decoration: underline;
}
.color-a {
  font-size: 18px;
  font-weight: 600;
  line-height: 1;
  color: #444;
  align-items: flex-start;
}
.color-bar {
  position: absolute;
  left: 2px;
  bottom: 0;
  width: 20px;
  height: 5px;
  background-color: #ff0000;
}
.num-sym {
  font-size: 19px;
  color: #555;
}
.num-comma {
  font-weight: 700;
  padding-bottom: 13px;
}
.dec {
  flex-direction: column;
  font-size: 9.500px;
  line-height: 10px;
  color: #555;
}
.dec-line {
  display: flex;
  align-items: center;
}
.arrow-l, .arrow-r {
  width: 0;
  height: 0;
  border-top: 4px solid transparent;
  border-bottom: 4px solid transparent;
}
.arrow-l {
  border-right: 7px solid #3f7cbf;
}
.arrow-r {
  border-left: 7px solid #3f7cbf;
}

/* style gallery */
.gallery {
  display: flex;
  width: 413px;
  height: 77px;
  margin-top: 6px;
  background-color: #fff;
  border: 1px solid #b4b4b4;
}
.gallery-cells {
  display: grid;
  grid-template-columns: repeat(3, 125px);
  grid-template-rows: 27px 27px;
  gap: 6px;
  width: 394px;
  padding: 7px 0 0 2px;
}
.style-cell {
  display: flex;
  align-items: center;
  padding: 0 0 2px 4px;
  font-size: 15px;
}
.s-normal { background-color: #fff; color: #000; outline: 3px solid #c0c0c0; }
.s-bad { background-color: #ffc7ce; color: #9c0006; }
.s-good { background-color: #c6efce; color: #006100; }
.s-neutral { background-color: #ffeb9c; color: #9c6500; }
.s-calc { background-color: #f2f2f2; color: #fa7d00; font-weight: 700; border: 1px solid #7f7f7f; font-size: 14.500px; padding-left: 3px; }
.s-check { background-color: #a5a5a5; color: #fff; font-weight: 700; border: 3px double #3f3f3f; font-size: 14.500px; padding-left: 3px; }
.gallery-scroll {
  display: flex;
  flex-direction: column;
  width: 17px;
  border-left: 1px solid #c6c6c6;
}
.gs {
  display: flex;
  flex-direction: column;
  align-items: center;
  justify-content: center;
  gap: 2px;
  background-color: #f5f5f5;
  border-bottom: 1px solid #c6c6c6;
}
.gs-up { height: 26px; background-color: #e2e2e2; }
.gs-mid { height: 24px; }
.gs-more { flex: 1; border-bottom: 0; }
.more-bar {
  width: 7px;
  height: 1px;
  background-color: #666;
}
.sort-a, .sort-z {
  font-family: "Open Sans", sans-serif;
  font-size: 20px;
  font-weight: 600;
}
.sort-a { fill: #3f7cbf; }
.sort-z { fill: #8a5fb5; }
.collapse {
  position: absolute;
  right: 10px;
  bottom: 6px;
}

/* formula bar */
.formula-bar {
  display: flex;
  height: 54px;
  flex: none;
  padding-top: 12px;
  align-items: flex-start;
}
.name-box, .fx-box, .formula-input {
  display: flex;
  align-items: center;
  height: 29px;
  background-color: #fff;
  border: 1px solid #c6c6c6;
}
.name-box {
  width: 126px;
  margin-left: 6px;
  padding: 0 9px 0 7px;
  justify-content: space-between;
  font-size: 15.500px;
  color: #444;
}
.grip {
  width: 4px;
  height: 14px;
  margin: 8px 16px 0 18px;
  background-image: linear-gradient(#b0b0b0 3px, transparent 3px);
  background-size: 4px 5px;
}
.fx-box {
  width: 136px;
  padding: 0 15px;
  justify-content: space-between;
}
.fx {
  font-family: "Liberation Serif", serif;
  font-style: italic;
  font-weight: 700;
  font-size: 18px;
  color: #666;
}
.formula-input {
  width: 1604px;
  margin-left: 4px;
  padding: 0 3px 0 13px;
  justify-content: space-between;
  font-size: 15.850px;
  color: #444;
}

/* sheet */
.sheet {
  display: flex;
  height: 786px;
  flex: none;
  border-bottom: 1px solid #a8a8a8;
}
.grid-wrap {
  width: 1895px;
  height: 785px;
  flex: none;
  overflow: hidden;
  background-color: #fff;
  border-right: 1px solid #a0a0a0;
}
.grid {
  width: 2094px;
  table-layout: fixed;
  border-collapse: collapse;
  font-family: "Liberation Serif", serif;
  font-size: 23px;
  color: #000;
}
.c-head { width: 40px; }
.c-a { width: 1367px; }
.c-b { width: 177px; }
.c-c { width: 510px; }
th {
  font-family: "Open Sans", sans-serif;
  font-size: 16px;
  font-weight: 400;
  color: #222;
  background-color: #e6e6e6;
  padding: 0;
}
.corner {
  position: relative;
  height: 27px;
  border-right: 1px solid #a0a0a0;
  border-bottom: 1px solid #a0a0a0;
}
.corner-tri {
  position: absolute;
  right: 3px;
  bottom: 3px;
  width: 0;
  height: 0;
  border-left: 20px solid transparent;
  border-bottom: 20px solid #b4b4b4;
}
.ch {
  height: 27px;
  border-right: 1px solid #b4b4b4;
  border-bottom: 1px solid #a0a0a0;
}
.ch-on {
  background-color: #d2d2d2;
  border-bottom: 2px solid #217346;
}
.rh {
  height: 30px;
  border-right: 1px solid #a0a0a0;
  border-bottom: 1px solid #b4b4b4;
}
.rh-on {
  background-color: #d2d2d2;
  color: #217346;
}
td {
  height: 30px;
  padding: 2px 3px 0;
  line-height: 27px;
  white-space: nowrap;
  overflow: hidden;
  border-right: 1px solid #000;
  border-bottom: 1px solid #000;
}
.mid {
  text-align: center;
}
.r-head td {
  background-color: #f8cbad;
}
.hl {
  background-color: #ffc000;
}
.red {
  color: #ff0000;
}
.active {
  position: relative;
  overflow: visible;
  outline: 2px solid #217346;
  outline-offset: -1px;
}
.active::after {
  content: "";
  position: absolute;
  right: -3px;
  bottom: -3px;
  width: 5px;
  height: 5px;
  background-color: #217346;
}
.blank th {
  height: 28px;
}
.blank td {
  height: 28px;
  border-right-color: #d4d4d4;
  border-bottom-color: #d4d4d4;
}

/* scrollbars */
.vscroll {
  display: flex;
  flex-direction: column;
  width: 19px;
  height: 785px;
  margin: 0 0 0 3px;
  padding-top: 2px;
}
.sb-btn {
  display: flex;
  align-items: center;
  justify-content: center;
  flex: none;
  background-color: #fff;
  border: 1px solid #c6c6c6;
}
.sb-up { height: 19px; }
.sb-down { height: 17px; }
.sb-thumb {
  height: 716px;
  flex: none;
  margin-top: 1px;
  background-color: #fff;
  border: 1px solid #c6c6c6;
}
.sb-track {
  flex: 1;
  background-color: #d9d9d9;
}
.sheet-tabs {
  display: flex;
  height: 29px;
  flex: none;
  align-items: flex-start;
  border-bottom: 1px solid #c6c6c6;
}
.nav-tri {
  display: block;
  width: 0;
  height: 0;
  border-top: 5px solid transparent;
  border-bottom: 5px solid transparent;
}
.nav-left {
  margin: 9px 0 0 25px;
  border-right: 6px solid #c0c0c0;
}
.nav-right {
  margin: 9px 0 0 23px;
  border-left: 6px solid #c0c0c0;
}
.nav-dark-left {
  border-right: 6px solid #777;
}
.nav-dark-right {
  border-left: 6px solid #777;
}
.sheet-tab {
  width: 79px;
  height: 26px;
  margin-left: 42px;
  margin-top: -1px;
  background-color: #fff;
  border: 1px solid #b4b4b4;
  border-top: 0;
  border-bottom: 2px solid #217346;
  text-align: center;
  line-height: 23px;
  font-size: 16px;
  font-weight: 700;
  color: #217346;
}
.add-sheet {
  margin: 4px 0 0 34px;
}
.grip-tabs {
  margin: 7px 0 0 33px;
}
.hscroll {
  display: flex;
  width: 1610px;
  height: 19px;
  margin: 5px 0 0 13px;
}
.hs-btn {
  display: flex;
  align-items: center;
  justify-content: center;
  width: 19px;
  flex: none;
  background-color: #fff;
  border: 1px solid #c6c6c6;
}
.hs-thumb {
  width: 1373px;
  flex: none;
  margin-left: 1px;
  background-color: #fff;
  border: 1px solid #b4b4b4;
}
.hs-track {
  flex: 1;
  background-color: #d9d9d9;
}

/* status bar */
.status {
  display: flex;
  align-items: center;
  height: 26px;
  flex: none;
  background-color: #f0f0f0;
  font-size: 12px;
  color: #666;
}
.ready {
  margin-left: 7px;
}
.views {
  display: flex;
  margin-left: auto;
  height: 26px;
}
.view {
  display: flex;
  align-items: center;
  justify-content: center;
  width: 41px;
  height: 26px;
  padding-right: 2px;
}
.view-on {
  background-color: #c6c6c6;
}
.zoom-minus {
  width: 9px;
  height: 2px;
  margin-left: 5px;
  background-color: #666;
}
.zoom-slider {
  position: relative;
  width: 125px;
  height: 1px;
  margin-left: 5px;
  background-color: #a0a0a0;
}
.zoom-thumb {
  position: absolute;
  left: 62px;
  top: -6px;
  width: 5px;
  height: 13px;
  background-color: #666;
}
.zoom-plus {
  position: relative;
  width: 11px;
  height: 2px;
  margin-left: 4px;
  background-color: #666;
}
.zoom-plus::after {
  content: "";
  position: absolute;
  left: 4.500px;
  top: -4.500px;
  width: 2px;
  height: 11px;
  background-color: #666;
}
.zoom-val {
  width: 30px;
  margin: 0 9px 0 17px;
}
.bottom-edge {
  height: 2px;
  flex: none;
  background-color: #222;
}
```
